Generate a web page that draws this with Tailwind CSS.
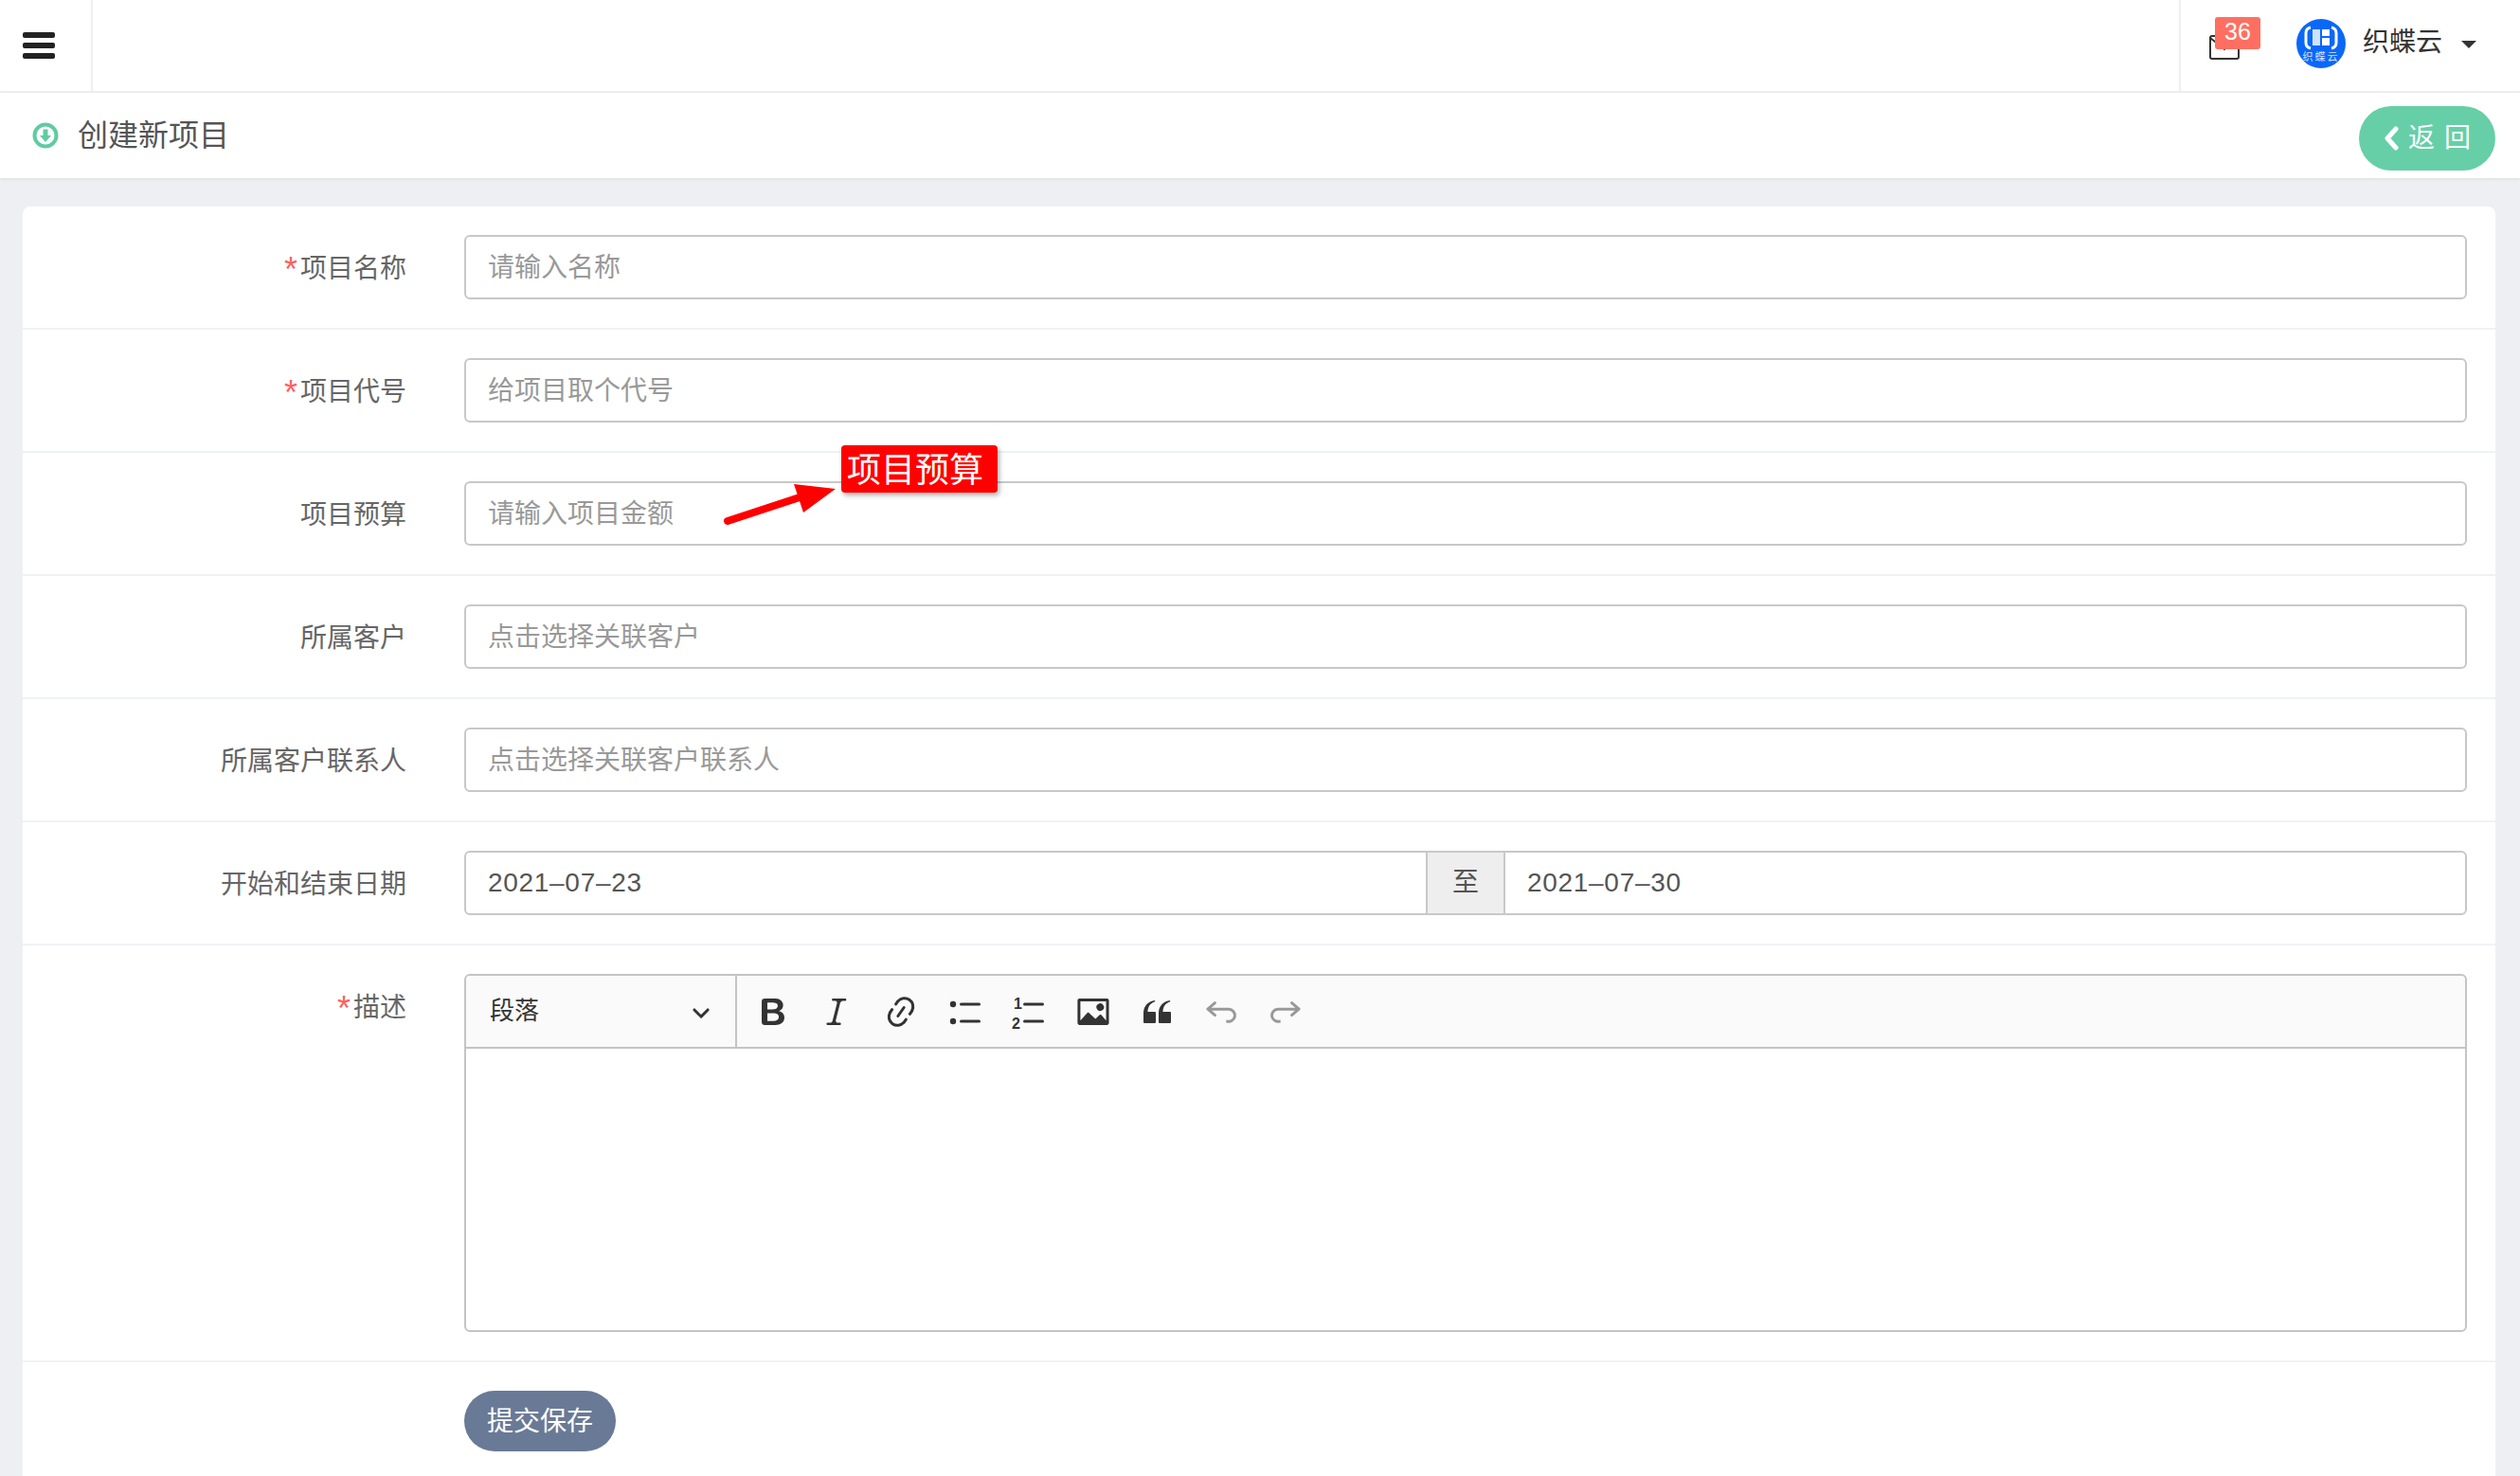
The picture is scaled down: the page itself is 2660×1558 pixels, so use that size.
<!DOCTYPE html>
<html lang="zh-CN">
<head>
    <meta charset="UTF-8">
    <title>创建新项目</title>
    <script src="https://cdn.jsdelivr.net/npm/@tailwindcss/browser@4"></script>
</head>
<body class="h-screen overflow-hidden bg-[#eeeff3] text-[28px] text-[#666] font-['Liberation_Sans','Noto_Sans_CJK_SC',sans-serif]">
    <!-- Top bar -->
    <header class="flex h-[98px] bg-white border-b-2 border-[#eeeff3]">
        <div class="flex w-[98px] items-center border-r-2 border-[#eeeff3] pl-6">
            <svg class="w-[34px] h-[30px]" viewBox="0 0 34 30" fill="#222">
                <rect y="1" width="34" height="6" rx="2"/>
                <rect y="12" width="34" height="6" rx="2"/>
                <rect y="23" width="34" height="6" rx="2"/>
            </svg>
        </div>
        <div class="flex-1"></div>
        <div class="flex w-[360px] items-center border-l-2 border-[#eeeff3] pl-[30px]">
            <div class="relative w-[32px] h-[26px] mt-[3px]">
                <svg class="w-[32px] h-[26px]" viewBox="0 0 32 26" fill="none" stroke="#333" stroke-width="2">
                    <rect x="1" y="1" width="30" height="24" rx="2"/>
                    <path d="M1 3l15 12L31 3"/>
                </svg>
                <span class="absolute left-[6px] top-[-19px] w-[48px] h-[34px] rounded-[3px] bg-[#ff6f61] text-white text-[25px] leading-[31px] text-center">36</span>
            </div>
            <svg class="ml-[60px] w-[52px] h-[52px] mt-[-5px]" viewBox="0 0 52 52">
                <circle cx="26" cy="26" r="26" fill="#0a68f7"/>
                <path d="M15 9q-5 1-5 6v10q0 5 5 6M37 9q5 1 5 6v10q0 5-5 6" fill="none" stroke="#fff" stroke-width="3"/>
                <rect x="17" y="11" width="8" height="17" fill="#cfe2ff"/>
                <rect x="27" y="11" width="8" height="7" fill="#fff"/>
                <rect x="27" y="20" width="8" height="8" fill="#fff"/>
                <text x="26" y="44" text-anchor="middle" font-size="11" letter-spacing="2" fill="#cfe2ff">织蝶云</text>
            </svg>
            <span class="ml-[18px] text-[#333] mt-[-6px]">织蝶云</span>
            <span class="ml-5 mt-[-2px] w-0 h-0 border-x-[8px] border-x-transparent border-t-[8px] border-t-[#333]"></span>
        </div>
    </header>

    <!-- Page title -->
    <div class="flex h-[90px] items-center justify-between bg-white pl-[34px] pr-[26px] shadow-[0_1px_3px_rgba(0,0,0,0.08)]">
        <div class="flex items-center">
            <svg class="w-[28px] h-[28px]" viewBox="0 0 28 28">
                <circle cx="14" cy="14" r="11.5" fill="none" stroke="#5fcca2" stroke-width="4"/>
                <path d="M11.5 7.5h5V14h3.5L14 21l-6-7h3.5z" fill="#5fcca2"/>
            </svg>
            <h1 class="ml-[20px] text-[32px] text-[#555]">创建新项目</h1>
        </div>
        <button class="flex w-[144px] h-[68px] mt-[6px] items-center justify-center rounded-full bg-[#66cfa7] text-white text-[28px]">
            <svg class="w-[16px] h-[26px] mr-[10px]" viewBox="0 0 16 26" fill="none" stroke="#fff" stroke-width="5" stroke-linecap="round" stroke-linejoin="round"><path d="M13 3L4 13l9 10"/></svg>
            <span class="tracking-[10px] mr-[-10px]">返回</span>
        </button>
    </div>

    <!-- Form card -->
    <main class="relative ml-6 mr-[26px] mt-[30px] rounded-t-lg bg-white">
        <div class="flex py-[30px] pr-[30px] border-b-2 border-[#eff2f5]">
            <label class="w-[405px] h-[68px] text-right leading-[71px]"><span class="mr-[3px] text-[#ff5f5f] text-[36px] leading-none align-[-4px]">*</span>项目名称</label>
            <input class="ml-[61px] flex-1 h-[68px] pl-[23px] pr-6 pt-[2px] border-2 border-[#c8c8c8] rounded-md placeholder:text-[#999]" placeholder="请输入名称">
        </div>
        <div class="flex py-[30px] pr-[30px] border-b-2 border-[#eff2f5]">
            <label class="w-[405px] h-[68px] text-right leading-[71px]"><span class="mr-[3px] text-[#ff5f5f] text-[36px] leading-none align-[-4px]">*</span>项目代号</label>
            <input class="ml-[61px] flex-1 h-[68px] pl-[23px] pr-6 pt-[2px] border-2 border-[#c8c8c8] rounded-md placeholder:text-[#999]" placeholder="给项目取个代号">
        </div>
        <div class="flex py-[30px] pr-[30px] border-b-2 border-[#eff2f5]">
            <label class="w-[405px] h-[68px] text-right leading-[71px]">项目预算</label>
            <input class="ml-[61px] flex-1 h-[68px] pl-[23px] pr-6 pt-[2px] border-2 border-[#c8c8c8] rounded-md placeholder:text-[#999]" placeholder="请输入项目金额">
        </div>
        <div class="flex py-[30px] pr-[30px] border-b-2 border-[#eff2f5]">
            <label class="w-[405px] h-[68px] text-right leading-[71px]">所属客户</label>
            <input class="ml-[61px] flex-1 h-[68px] pl-[23px] pr-6 pt-[2px] border-2 border-[#c8c8c8] rounded-md placeholder:text-[#999]" placeholder="点击选择关联客户">
        </div>
        <div class="flex py-[30px] pr-[30px] border-b-2 border-[#eff2f5]">
            <label class="w-[405px] h-[68px] text-right leading-[71px]">所属客户联系人</label>
            <input class="ml-[61px] flex-1 h-[68px] pl-[23px] pr-6 pt-[2px] border-2 border-[#c8c8c8] rounded-md placeholder:text-[#999]" placeholder="点击选择关联客户联系人">
        </div>
        <div class="flex py-[30px] pr-[30px] border-b-2 border-[#eff2f5]">
            <label class="w-[405px] h-[68px] text-right leading-[71px]">开始和结束日期</label>
            <div class="ml-[61px] flex flex-1 h-[68px]">
                <input class="flex-1 min-w-0 pl-[23px] pr-6 border-2 border-[#c8c8c8] rounded-l-md text-[#555] tracking-[0.7px]" value="2021–07–23">
                <span class="w-[80px] border-y-2 border-[#c8c8c8] bg-[#eee] text-center leading-[64px] text-[#555]">至</span>
                <input class="flex-1 min-w-0 pl-[23px] pr-6 border-2 border-[#c8c8c8] rounded-r-md text-[#555] tracking-[0.7px]" value="2021–07–30">
            </div>
        </div>
        <div class="flex py-[30px] pr-[30px] border-b-2 border-[#eff2f5]">
            <label class="w-[405px] h-[68px] text-right leading-[71px]"><span class="mr-[3px] text-[#ff5f5f] text-[36px] leading-none align-[-4px]">*</span>描述</label>
            <div class="ml-[61px] flex-1 h-[378px] flex flex-col border-2 border-[#c4c4c4] rounded-md">
                <div class="flex h-[77px] items-center bg-[#fafafa] border-b-2 border-[#c4c4c4] rounded-t-md">
                    <div class="flex w-[286px] h-full items-center justify-between border-r-2 border-[#c4c4c4] pl-[25px] pr-[26px] text-[26px] text-[#333]">
                        <span>段落</span>
                        <svg class="w-[20px] h-[20px]" viewBox="0 0 10 10" fill="#333"><path d="M.941 4.523a.75.75 0 1 1 1.06-1.06l3.006 3.005 3.005-3.005a.75.75 0 1 1 1.06 1.06l-3.549 3.55a.75.75 0 0 1-1.168-.136L.941 4.523z"/></svg>
                    </div>
                    <div class="flex pl-[4px]">
                        <span class="flex w-[67.6px] justify-center"><svg class="w-[40px] h-[40px]" viewBox="0 0 20 20" fill="#333"><path d="M10.187 17H5.773c-.637 0-1.092-.138-1.364-.415-.273-.277-.409-.718-.409-1.323V4.738c0-.617.14-1.062.419-1.332.279-.27.73-.406 1.354-.406h4.68c.69 0 1.288.041 1.793.124.506.083.96.242 1.36.478.341.197.644.447.906.75a3.262 3.262 0 0 1 .808 2.162c0 1.401-.722 2.426-2.167 3.075C15.05 10.175 16 11.315 16 13.01a3.756 3.756 0 0 1-2.296 3.504 6.1 6.1 0 0 1-1.517.377c-.571.073-1.238.11-2 .11zm-.217-6.217H7v4.087h3.069c1.977 0 2.965-.69 2.965-2.072 0-.707-.256-1.22-.768-1.537-.512-.319-1.277-.478-2.296-.478zM7 5.13v3.619h2.606c.729 0 1.292-.067 1.69-.2a1.6 1.6 0 0 0 .91-.765c.165-.267.247-.566.247-.897 0-.707-.26-1.176-.778-1.409-.519-.232-1.31-.348-2.375-.348H7z"/></svg></span>
                        <span class="flex w-[67.6px] justify-center"><svg class="w-[40px] h-[40px]" viewBox="0 0 20 20" fill="#333"><path d="m9.586 14.633.021.004c-.036.335.095.655.393.962.082.083.173.15.274.201h1.474a.6.6 0 1 1 0 1.2H5.304a.6.6 0 0 1 0-1.2h1.15c.474-.07.809-.182 1.005-.334.157-.122.291-.32.404-.597l2.416-9.55a1.053 1.053 0 0 0-.281-.823 1.12 1.12 0 0 0-.442-.296H8.15a.6.6 0 0 1 0-1.2h6.443a.6.6 0 1 1 0 1.2h-1.195c-.376.056-.65.155-.823.296-.215.175-.423.439-.623.79l-2.366 9.347z"/></svg></span>
                        <span class="flex w-[67.6px] justify-center"><svg class="w-[40px] h-[40px]" viewBox="0 0 20 20" fill="#333"><path d="m11.077 15 .991-1.416a.75.75 0 1 1 1.229.86l-1.148 1.64a.748.748 0 0 1-.217.206 5.251 5.251 0 0 1-8.503-5.955.741.741 0 0 1 .12-.274l1.147-1.639a.75.75 0 1 1 1.228.86L4.933 10.7l.006.003a3.75 3.75 0 0 0 6.132 4.294l.006.004zm5.494-5.335a.748.748 0 0 1-.12.274l-1.147 1.639a.75.75 0 1 1-1.228-.86l.86-1.23a3.75 3.75 0 0 0-6.144-4.301l-.86 1.229a.75.75 0 0 1-1.229-.86l1.148-1.64a.748.748 0 0 1 .217-.206 5.251 5.251 0 0 1 8.503 5.955zm-4.563-2.532a.75.75 0 0 1 .184 1.045l-3.155 4.505a.75.75 0 1 1-1.229-.86l3.155-4.506a.75.75 0 0 1 1.045-.184z"/></svg></span>
                        <span class="flex w-[67.6px] justify-center"><svg class="w-[40px] h-[40px]" viewBox="0 0 20 20" fill="#333"><circle cx="3.5" cy="6" r="1.6"/><circle cx="3.5" cy="15" r="1.6"/><rect x="7" y="5.2" width="11" height="1.5" rx=".75"/><rect x="7" y="14.2" width="11" height="1.5" rx=".75"/></svg></span>
                        <span class="flex w-[67.6px] justify-center"><svg class="w-[40px] h-[40px]" viewBox="0 0 20 20" fill="#333"><text x="2" y="8.4" font-size="8" font-weight="700">1</text><text x="1" y="19" font-size="8" font-weight="700">2</text><rect x="7" y="5.2" width="11" height="1.5" rx=".75"/><rect x="7" y="14.2" width="11" height="1.5" rx=".75"/></svg></span>
                        <span class="flex w-[67.6px] justify-center"><svg class="w-[40px] h-[40px]" viewBox="0 0 20 20" fill="#333"><path d="M6.91 10.54c.26-.23.64-.21.88.03l3.36 3.14 2.23-2.06a.64.64 0 0 1 .87 0l2.52 2.97V4.5H3.2v10.12l3.71-4.08zm10.27-7.51c.6 0 1.09.47 1.09 1.05v11.84c0 .59-.49 1.06-1.09 1.06H2.79c-.6 0-1.09-.47-1.09-1.06V4.08c0-.58.49-1.05 1.1-1.05h14.38zm-5.22 5.56a1.96 1.96 0 1 1 3.4-1.96 1.96 1.96 0 0 1-3.4 1.96z"/></svg></span>
                        <span class="flex w-[67.6px] justify-center"><svg class="w-[40px] h-[40px]" viewBox="0 0 20 20" fill="#333"><path d="M3 10.423a6.5 6.5 0 0 1 6.056-6.408l.038.67C6.448 5.423 5.354 7.663 5.22 10H9c.552 0 .5.432.5.986v4.511c0 .554-.448.503-1 .503h-5c-.552 0-.5-.449-.5-1.003v-4.574zm8 0a6.5 6.5 0 0 1 6.056-6.408l.038.67c-2.646.739-3.74 2.979-3.873 5.315H17c.552 0 .5.432.5.986v4.511c0 .554-.448.503-1 .503h-5c-.552 0-.5-.449-.5-1.003v-4.574z"/></svg></span>
                        <span class="flex w-[67.6px] justify-center"><svg class="w-[40px] h-[40px]" viewBox="0 0 20 20" fill="#999"><path d="m5.042 9.367 2.189 1.837a.75.75 0 0 1-.965 1.149l-3.788-3.18a.747.747 0 0 1-.21-.284.75.75 0 0 1 .17-.945L6.23 4.762a.75.75 0 1 1 .964 1.15L4.863 7.866h8.917A.75.75 0 0 1 14 7.9a4 4 0 1 1-1.477 7.718l.344-1.489a2.5 2.5 0 1 0 1.094-4.73l.008-.032H5.042z"/></svg></span>
                        <span class="flex w-[67.6px] justify-center"><svg class="w-[40px] h-[40px]" viewBox="0 0 20 20" fill="#999"><path d="m14.958 9.367-2.189 1.837a.75.75 0 0 0 .965 1.149l3.788-3.18a.747.747 0 0 0 .21-.284.75.75 0 0 0-.17-.945L13.77 4.762a.75.75 0 1 0-.964 1.15l2.331 1.955H6.22A.75.75 0 0 0 6 7.9a4 4 0 1 0 1.477 7.718l-.344-1.489A2.5 2.5 0 1 1 6.039 9.4l-.008-.032h8.927z"/></svg></span>
                    </div>
                </div>
                <div class="flex-1 bg-white rounded-b-md"></div>
            </div>
        </div>
        <div class="pl-[466px] py-[30px]">
            <button class="w-[160px] h-[64px] pt-[2px] rounded-full bg-[#697a96] text-white">提交保存</button>
        </div>

        <!-- Annotation over the budget field -->
        <div class="absolute left-[864px] top-[252px] w-[165px] h-[50px] rounded-[4px] bg-[#ff0000] pl-[6px] pt-[3px] text-white text-[36px] leading-[48px] shadow-[2px_3px_5px_rgba(0,0,0,0.3)]">项目预算</div>
        <svg class="absolute left-[730px] top-[270px] w-[140px] h-[70px]" viewBox="0 0 140 70" fill="#f00">
            <path d="M14 62L90 37" stroke="#f00" stroke-width="8" stroke-linecap="round"/>
            <path d="M84 23L128 28L94 53z"/>
        </svg>
    </main>
</body>
</html>
